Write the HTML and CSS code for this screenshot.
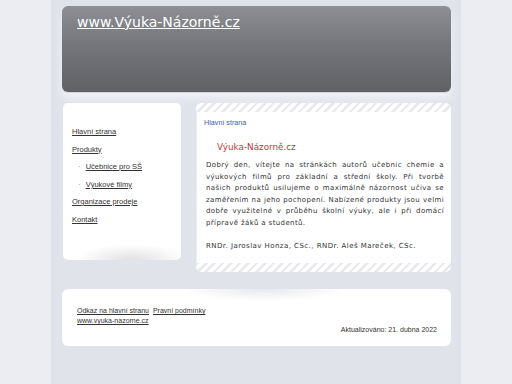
FILE: index.html
```html
<!DOCTYPE html>
<html lang="cs">
<head>
<meta charset="utf-8">
<title>Výuka-Názorně.cz</title>
<link rel="stylesheet" href="styles.css">
</head>
<body>
<div class="page">
  <header class="header">
    <a class="site-title" href="#">www.Výuka-Názorně.cz</a>
  </header>
  <div class="main">
    <nav class="sidebar">
      <ul class="menu">
        <li><a href="#">Hlavní strana</a></li>
        <li><a href="#">Produkty</a></li>
        <li class="sub"><a href="#">Učebnice pro SŠ</a></li>
        <li class="sub"><a href="#">Výukové filmy</a></li>
        <li><a href="#">Organizace prodeje</a></li>
        <li><a href="#">Kontakt</a></li>
      </ul>
    </nav>
    <section class="content">
      <div class="stripes"></div>
      <div class="content-body">
        <div class="crumb">Hlavní strana</div>
        <h1 class="heading">Výuka-Názorně.cz</h1>
        <p class="text"><span class="ln">Dobrý den, vítejte na stránkách autorů učebnic chemie a</span> <span class="ln">výukových filmů pro základní a střední školy. Při tvorbě</span> <span class="ln">našich produktů usilujeme o maximálně názornost učiva se</span> <span class="ln">zaměřením na jeho pochopení. Nabízené produkty jsou velmi</span> <span class="ln">dobře využitelné v průběhu školní výuky, ale i při domácí</span> přípravě žáků a studentů.</p>
        <p class="text sign">RNDr. Jaroslav Honza, CSc., RNDr. Aleš Mareček, CSc.</p>
      </div>
      <div class="stripes"></div>
    </section>
  </div>
  <footer class="footer">
    <div class="foot-links">
      <a href="#">Odkaz na hlavní stranu</a>&nbsp; <a href="#">Pravní podmínky</a><br>
      <a href="#">www.vyuka-nazorne.cz</a>
    </div>
    <div class="updated">Aktualizováno: 21. dubna 2022</div>
  </footer>
</div>
</body>
</html>
```
FILE: styles.css
```css
html, body {
  margin: 0;
  padding: 0;
}
body {
  background: #ecedf2;
  font-family: "Liberation Sans", Arial, sans-serif;
  color: #333;
}
.page {
  width: 389px;
  height: 384px;
  margin: 0 auto;
  padding: 6px 10px 0 11px;
  box-sizing: content-box;
  background: #e1e3eb;
}
.header {
  height: 86px;
  border-radius: 6px;
  background: linear-gradient(180deg, #8e8f95 0%, #75767b 45%, #606165 100%);
  box-shadow: 0 1px 0 #d4d5dc, 0 6px 8px rgba(255,255,255,0.55);
  padding: 7px 0 0 15px;
  box-sizing: border-box;
}
.site-title {
  font-family: "DejaVu Sans", Verdana, sans-serif;
  font-size: 14px;
  line-height: 16px;
  color: #fff;
  text-decoration: underline;
  text-decoration-thickness: 1px;
}
.main {
  display: flex;
  gap: 15px;
  margin-top: 11px;
  align-items: flex-start;
}
.sidebar {
  width: 118px;
  height: 157px;
  margin-left: 1px;
  background: #fff;
  border-radius: 5px;
  background-image: radial-gradient(ellipse 55px 16px at 58% 100%, rgba(200,200,205,0.55), rgba(255,255,255,0) 100%);
}
.menu {
  list-style: none;
  margin: 0;
  padding: 20px 0 0 9px;
}
.menu li {
  font-size: 7.5px;
  line-height: 17.5px;
  height: 17.5px;
}
.menu li.sub {
  padding-left: 6px;
}
.menu li.sub::before {
  content: "·";
  color: #999;
  font-size: 8px;
  margin-right: 5px;
}
.menu a {
  color: #333;
  text-decoration: underline;
}
.content {
  width: 255px;
  height: 169px;
  border-radius: 6px;
  overflow: hidden;
  background: #fff;
  display: flex;
  flex-direction: column;
}
.stripes {
  height: 9px;
  flex: none;
  background: repeating-linear-gradient(135deg, #e9eaef 0 2.5px, #ffffff 2.5px 6px);
}
.content-body {
  flex: 1;
  padding: 7px 7px 0 9px;
  border-left: 1px solid #eceef2;
}
.crumb {
  font-size: 7.2px;
  line-height: 8px;
  color: #3d5fa8;
  margin-left: -2px;
}
.heading {
  margin: 14px 0 0 11px;
  font-family: "DejaVu Sans", Verdana, sans-serif;
  font-weight: normal;
  font-size: 8.8px;
  line-height: 12px;
  color: #c0393b;
}
.text {
  margin: 7px 0 0 0;
  font-family: "DejaVu Sans", Verdana, sans-serif;
  font-size: 7px;
  line-height: 11.6px;
  letter-spacing: 0.38px;
  text-align: justify;
  color: #333;
}
.text .ln {
  display: block;
  white-space: nowrap;
  text-align: justify;
  text-align-last: justify;
}
.text.sign {
  margin-top: 11.4px;
  text-align: left;
  letter-spacing: 0.45px;
}
.footer {
  margin-top: 17px;
  height: 57px;
  border-radius: 6px;
  background: #fff;
  background-image: radial-gradient(ellipse 80px 12px at 52% 0%, rgba(215,216,222,0.6), rgba(255,255,255,0) 100%);
  padding: 17px 14px 0 15px;
  box-sizing: border-box;
  font-size: 7px;
}
.foot-links {
  line-height: 10px;
}
.foot-links a {
  color: #333;
  text-decoration: underline;
}
.updated {
  margin-top: -1px;
  line-height: 10px;
  text-align: right;
  color: #333;
}
```
